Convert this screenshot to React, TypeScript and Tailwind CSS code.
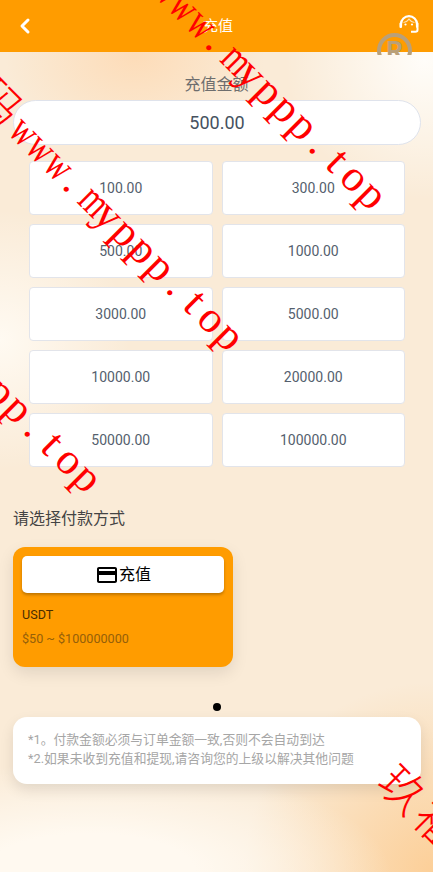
import { ChevronLeft } from "lucide-react";

const amounts = ["100.00", "300.00", "500.00", "1000.00", "3000.00", "5000.00", "10000.00", "20000.00", "50000.00", "100000.00"];

function Headset() {
  return (
    <svg className="-mt-[4px]" width="20" height="18" viewBox="0 0 20 18" fill="none" stroke="white" strokeWidth="2.2">
      <path d="M2 11.5V9C2 4.6 5.6 1.2 10 1.2S18 4.6 18 9V11.5" />
      <path d="M4.5 7.5C7 7.2 8.8 6 10 4.2C11.2 6 13 7.2 15.5 7.5" strokeWidth="1.2" strokeOpacity="0.7" />
      <rect x="0.5" y="7.5" width="2.5" height="5.5" rx="1" fill="white" stroke="none" />
      <rect x="17" y="7.5" width="2.5" height="5.5" rx="1" fill="white" stroke="none" />
      <path d="M18.5 12.5V15C18.5 16.2 17.8 16.8 16.5 16.8H12" strokeWidth="2" />
      <circle cx="6.5" cy="9.5" r="1.1" fill="white" stroke="none" />
      <circle cx="13" cy="9.5" r="1.1" fill="white" stroke="none" />
    </svg>
  );
}

// fixed pitch letters, the wide ones squeezed to fit it
function Watermark({ text, left, top }: { text: string; left: number; top: number }) {
  return (
    <div
      className="pointer-events-none absolute z-30 flex h-[50px] origin-left rotate-45 items-center whitespace-nowrap text-[#ff0000]"
      style={{ left, top, fontFamily: '"Liberation Serif", "Noto Sans CJK SC", serif' }}
    >
      {text.split("").map((c, i) =>
        c.charCodeAt(0) > 255 ? (
          <span key={i} className="w-[50px] text-center text-[46px] font-light leading-[50px]">
            {c}
          </span>
        ) : (
          <span
            key={i}
            className={`w-[24.4px] text-center text-[44px] leading-[50px] ${c === "m" || c === "w" ? "scale-x-[0.72]" : ""}`}
          >
            {c}
          </span>
        ),
      )}
    </div>
  );
}

export default function App() {
  return (
    <div
      className="relative h-[872px] w-[433px] overflow-hidden bg-[#faebd7] bg-[radial-gradient(ellipse_130px_90px_at_135px_55px,#fddcb8_0,rgba(253,220,184,0)_100%),radial-gradient(circle_at_425px_60px,#fffdf9_0,rgba(255,253,249,0)_140px),radial-gradient(circle_at_0px_340px,#fffaf2_0,rgba(255,250,242,0)_130px),radial-gradient(ellipse_300px_110px_at_90px_872px,#fff9f0_0,#fff9f0_35%,rgba(255,249,240,0)_100%),radial-gradient(circle_at_433px_872px,#fccf98_0,rgba(252,207,152,0)_190px)]"
      style={{ fontFamily: 'Roboto, "Noto Sans CJK SC", sans-serif' }}
    >
      <header className="flex h-[52px] items-center justify-between bg-[#ff9c00] pl-[13px] pr-[14px] text-white">
        <ChevronLeft size={24} strokeWidth={3} />
        <h1 className="text-[15px]">充值</h1>
        <Headset />
      </header>

      {/* registered mark sits half over the header */}
      <div className="absolute left-[377px] top-[33px] h-[22px] w-[35px] overflow-hidden">
        <div className="flex h-[35px] w-[35px] items-center justify-center rounded-full border-[4px] border-[#b9a07a] text-[26px] font-bold leading-none text-[#b9a07a]">
          R
        </div>
      </div>

      <main className="flex flex-col">
        <p className="mt-[23px] text-center text-[16px] leading-[20px] text-[#6e6e6e]">充值金额</p>
        <div className="ml-[13px] mt-[5px] flex h-[45px] w-[408px] items-center justify-center rounded-full border border-[#dfe3ec] bg-white text-[18px] font-normal text-[#465160]">
          500.00
        </div>

        <div className="ml-[29px] mt-[16px] grid w-[376px] grid-cols-2 gap-[9px]">
          {amounts.map((a) => (
            <div
              key={a}
              className="flex h-[54px] items-center justify-center rounded-[4px] border border-[#e2e4ea] bg-white text-[14px] text-[#555f6e]"
            >
              {a}
            </div>
          ))}
        </div>

        <h2 className="ml-[13px] mt-[41px] text-[16px] leading-[22px] text-[#444]">请选择付款方式</h2>

        <section className="ml-[13px] mt-[17px] h-[120px] w-[220px] rounded-[12px] bg-[#ff9c00] p-[9px] shadow-[0_6px_16px_rgba(0,0,0,0.1)]">
          <button className="flex h-[37px] w-full items-center justify-center rounded-[5px] bg-white text-[16px] text-black shadow-[0_2px_3px_rgba(0,0,0,0.25)]">
            <svg width="24" height="24" viewBox="0 0 24 24" fill="currentColor">
              <path d="M20 4H4c-1.11 0-1.99.89-1.99 2L2 18c0 1.11.89 2 2 2h16c1.11 0 2-.89 2-2V6c0-1.11-.89-2-2-2zm0 14H4v-6h16v6zm0-10H4V6h16v2z" />
            </svg>
            充值
          </button>
          <p className="mt-[14px] text-[12.6px] leading-[16px] text-[#4a2d00]">USDT</p>
          <p className="mt-[8px] text-[12.6px] leading-[16px] text-[#95600a]">$50 ~ $100000000</p>
        </section>

        <div className="mx-auto mt-[36px] h-[8px] w-[8px] rounded-full bg-black" />

        <section className="ml-[13px] mt-[6px] h-[67px] w-[408px] rounded-[14px] bg-white px-[15px] py-[13px] text-[12.8px] leading-[19px] text-[#a6a6a6] shadow-[0_6px_14px_rgba(0,0,0,0.1)]">
          <p>*1。付款金额必须与订单金额一致,否则不会自动到达</p>
          <p>*2.如果未收到充值和提现,请咨询您的上级以解决其他问题</p>
        </section>
      </main>

      <Watermark text="www.myppp.top" left={157} top={-46} />
      <Watermark text="码www.myppp.top" left={-21} top={60} />
      <Watermark text="www.myppp.top" left={-128} top={237} />
      <Watermark text="玖福" left={384} top={748} />
    </div>
  );
}
